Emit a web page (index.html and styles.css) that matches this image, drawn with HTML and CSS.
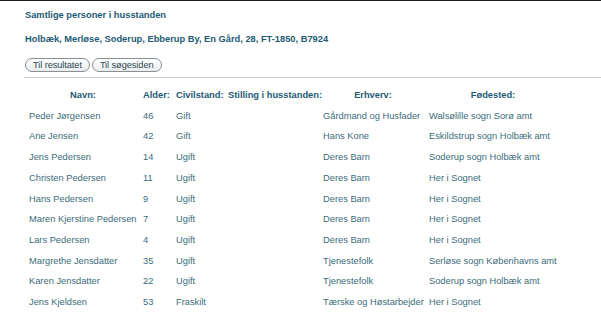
FILE: index.html
```html
<!DOCTYPE html>
<html lang="da">
<head>
<meta charset="utf-8">
<title>Samtlige personer i husstanden</title>
<link rel="stylesheet" href="styles.css">
</head>
<body>
<div class="page">
  <h1 class="title">Samtlige personer i husstanden</h1>
  <h2 class="place">Holbæk, Merløse, Soderup, Ebberup By, En Gård, 28, FT-1850, B7924</h2>
  <div class="buttons">
    <button class="btn" type="button">Til resultatet</button>
    <button class="btn" type="button">Til søgesiden</button>
  </div>
  <hr class="rule">
  <table class="persons">
    <colgroup>
      <col class="c-navn"><col class="c-alder"><col class="c-civil"><col class="c-stilling"><col class="c-erhverv"><col class="c-fode">
    </colgroup>
    <thead>
      <tr>
        <th class="center">Navn:</th>
        <th>Alder:</th>
        <th>Civilstand:</th>
        <th>Stilling i husstanden:</th>
        <th class="center">Erhverv:</th>
        <th class="center">Fødested:</th>
      </tr>
    </thead>
    <tbody>
      <tr><td>Peder Jørgensen</td><td>46</td><td>Gift</td><td></td><td>Gårdmand og Husfader</td><td>Walsølille sogn Sorø amt</td></tr>
      <tr><td>Ane Jensen</td><td>42</td><td>Gift</td><td></td><td>Hans Kone</td><td>Eskildstrup sogn Holbæk amt</td></tr>
      <tr><td>Jens Pedersen</td><td>14</td><td>Ugift</td><td></td><td>Deres Barn</td><td>Soderup sogn Holbæk amt</td></tr>
      <tr><td>Christen Pedersen</td><td>11</td><td>Ugift</td><td></td><td>Deres Barn</td><td>Her i Sognet</td></tr>
      <tr><td>Hans Pedersen</td><td>9</td><td>Ugift</td><td></td><td>Deres Barn</td><td>Her i Sognet</td></tr>
      <tr><td>Maren Kjerstine Pedersen</td><td>7</td><td>Ugift</td><td></td><td>Deres Barn</td><td>Her i Sognet</td></tr>
      <tr><td>Lars Pedersen</td><td>4</td><td>Ugift</td><td></td><td>Deres Barn</td><td>Her i Sognet</td></tr>
      <tr><td>Margrethe Jensdatter</td><td>35</td><td>Ugift</td><td></td><td>Tjenestefolk</td><td>Serløse sogn Københavns amt</td></tr>
      <tr><td>Karen Jensdatter</td><td>22</td><td>Ugift</td><td></td><td>Tjenestefolk</td><td>Soderup sogn Holbæk amt</td></tr>
      <tr><td>Jens Kjeldsen</td><td>53</td><td>Fraskilt</td><td></td><td>Tærske og Høstarbejder</td><td>Her i Sognet</td></tr>
    </tbody>
  </table>
</div>
</body>
</html>
```
FILE: styles.css
```css
html, body {
  margin: 0;
  padding: 0;
  background: #ffffff;
}
body {
  font-family: "Liberation Sans", Arial, sans-serif;
  font-size: 9.3px;
  color: #3b6c7a;
  border-top: 1px solid #1a1a1a;
}
.page {
  padding: 8px 0 0 25px;
}
.title, .place {
  margin: 0;
  font-size: 9.3px;
  line-height: 12px;
  font-weight: bold;
  color: #1d5a73;
}
.place {
  margin-top: 12px;
}
.buttons {
  display: flex;
  gap: 2px;
  margin-top: 13px;
}
.btn {
  font-family: "Liberation Sans", Arial, sans-serif;
  font-size: 9.3px;
  line-height: 12px;
  height: 14px;
  padding: 0 7px;
  border: 1px solid #8a8f93;
  border-radius: 7px;
  background: linear-gradient(#ffffff, #e9ecee);
  color: #2f4a56;
  letter-spacing: -0.1px;
}
.rule {
  margin: 5px 0 0 -1px;
  border: 0;
  border-top: 1px solid #c8c8c8;
  height: 0;
}
.persons {
  margin-top: 6px;
  width: 536px;
  border-collapse: separate;
  border-spacing: 2px;
  table-layout: fixed;
}
.c-navn { width: 112px; }
.c-alder { width: 31px; }
.c-civil { width: 50px; }
.c-stilling { width: 93px; }
.c-erhverv { width: 104px; }
.c-fode { width: 132px; }
.persons th, .persons td {
  padding: 2px;
  line-height: 14.7px;
  font-size: 9.3px;
  text-align: left;
  white-space: nowrap;
  overflow: visible;
}
.persons th {
  font-weight: bold;
  color: #1d5a73;
}
.persons th.center {
  text-align: center;
}
.persons td {
  color: #3b6c7a;
}
```
